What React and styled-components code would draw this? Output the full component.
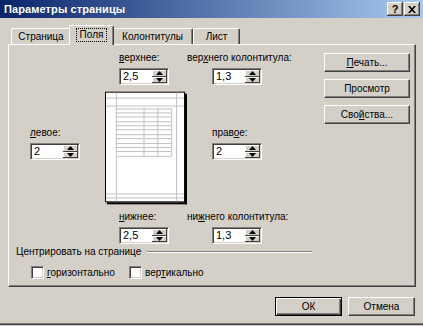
import React from "react";
import styled, { createGlobalStyle } from "styled-components";

const GlobalStyle = createGlobalStyle`
  body {
    margin: 0;
    background: #d4d0c8;
    font-family: "Liberation Sans", Arial, sans-serif;
    font-size: 10px;
    color: #000;
  }
`;

const Window = styled.div`
  width: 423px;
  height: 325px;
  box-sizing: border-box;
  background: #d4d0c8;
  border-bottom: 1px solid #404040;
  box-shadow: inset 0 -1px 0 #808080;
  display: flex;
  flex-direction: column;
  overflow: hidden;
`;

const TitleBar = styled.div`
  height: 18px;
  flex: none;
  display: flex;
  align-items: center;
  justify-content: space-between;
  padding: 0 3px 0 4px;
  background: linear-gradient(to right, #0a246a, #a6caf0);
`;

const Title = styled.span`
  color: #fff;
  font-weight: bold;
  font-size: 11px;
  letter-spacing: 0.1px;
`;

const CaptionButtons = styled.div`
  display: flex;
  gap: 1px;
`;

const CaptionButton = styled.div`
  width: 16px;
  height: 14px;
  box-sizing: border-box;
  background: #d4d0c8;
  box-shadow: inset -1px -1px 0 #404040, inset 1px 1px 0 #fff,
    inset -2px -2px 0 #808080;
  display: flex;
  align-items: center;
  justify-content: center;
  font-weight: bold;
  font-size: 11px;
  line-height: 1;
`;

const Body = styled.div`
  padding: 7px 7px 0 8px;
  display: flex;
  flex-direction: column;
`;

const TabStrip = styled.div`
  display: flex;
  align-items: flex-end;
  height: 19px;
  padding-left: 3px;
`;

const Tab = styled.div`
  position: relative;
  width: ${(p) => p.$width}px;
  height: ${(p) => (p.$active ? 20 : 16)}px;
  margin: ${(p) => (p.$active ? "0 -2px -1px" : "0")};
  z-index: ${(p) => (p.$active ? 2 : 1)};
  box-sizing: border-box;
  background: #d4d0c8;
  border-top: 1px solid #fff;
  border-left: 1px solid #fff;
  border-right: 1px solid #404040;
  border-radius: 2px 2px 0 0;
  box-shadow: inset -1px 0 0 #808080;
  display: flex;
  justify-content: center;
  align-items: ${(p) => (p.$active ? "flex-start" : "center")};
  padding-top: ${(p) => (p.$active ? 2 : 0)}px;
  line-height: 12px;
`;

const Focus = styled.span`
  outline: 1px dotted #000;
  padding: 0 3px;
  margin-top: 1px;
`;

const Panel = styled.div`
  width: 408px;
  height: 243px;
  box-sizing: border-box;
  border-top: 1px solid #fff;
  border-left: 1px solid #fff;
  border-right: 1px solid #404040;
  border-bottom: 1px solid #404040;
  box-shadow: inset -1px -1px 0 #808080;
  display: flex;
`;

const MarginArea = styled.div`
  padding-top: 7px;
  display: flex;
  flex-direction: column;
`;

const MarginGrid = styled.div`
  display: grid;
  grid-template-columns: 96px 82px 123px;
  grid-template-rows: 33px 114px 33px;
  row-gap: 6px;
`;

const Field = styled.div`
  display: flex;
  flex-direction: column;
  align-items: flex-start;
  gap: 4px;
  padding-left: ${(p) => p.$indent || 0}px;
  margin-top: ${(p) => p.$top || 0}px;
`;

const Label = styled.span`
  line-height: 12px;
  white-space: nowrap;
  margin-left: ${(p) => p.$shift || 0}px;
`;

const SpinBox = styled.div`
  width: 50px;
  height: 17px;
  box-sizing: border-box;
  background: #fff;
  border-top: 1px solid #808080;
  border-left: 1px solid #808080;
  border-right: 1px solid #fff;
  border-bottom: 1px solid #fff;
  box-shadow: inset 1px 1px 0 #404040, inset -1px -1px 0 #d4d0c8;
  display: flex;
  padding: 1px;
`;

const SpinText = styled.span`
  flex: 1;
  padding-left: 2px;
  line-height: 13px;
  font-size: 11px;
`;

const SpinButtons = styled.div`
  width: 15px;
  display: flex;
  flex-direction: column;
`;

const SpinButton = styled.div`
  flex: 1;
  background: #d4d0c8;
  box-shadow: inset -1px -1px 0 #404040, inset 1px 1px 0 #fff;
  display: flex;
  align-items: center;
  justify-content: center;
`;

const Arrow = ({ up }) => (
  <svg width="7" height="4" viewBox="0 0 7 4">
    <polygon points={up ? "0,4 7,4 3.5,0" : "0,0 7,0 3.5,4"} fill="#000" />
  </svg>
);

const Spin = ({ value }) => (
  <SpinBox>
    <SpinText>{value}</SpinText>
    <SpinButtons>
      <SpinButton>
        <Arrow up />
      </SpinButton>
      <SpinButton>
        <Arrow />
      </SpinButton>
    </SpinButtons>
  </SpinBox>
);

const PreviewCell = styled.div`
  display: flex;
`;

const PagePreview = () => {
  const rows = [];
  for (let y = 16.5; y <= 69; y += 4.4) rows.push(Math.round(y) + 0.5);
  const grey = "#c0c0c0";
  const last = rows[rows.length - 1];
  return (
    <svg width="83" height="114" viewBox="0 0 83 114">
      <rect x="81" y="2" width="2" height="112" fill="#000" />
      <rect x="2" y="112" width="81" height="2" fill="#000" />
      <rect x="0.5" y="0.5" width="80" height="111" fill="#fff" stroke="#000" />
      <line x1="11.5" y1="1" x2="11.5" y2="111" stroke={grey} />
      <line x1="72.5" y1="1" x2="72.5" y2="111" stroke={grey} />
      {[6.5, 14.5, 103.5, 107.5].map((y) => (
        <line key={y} x1="1" y1={y} x2="80" y2={y} stroke={grey} />
      ))}
      {rows.map((y) => (
        <line key={y} x1="11" y1={y} x2="67" y2={y} stroke={grey} />
      ))}
      <line x1="67.5" y1="16.5" x2="67.5" y2={last} stroke={grey} />
      <line x1="39.5" y1="16.5" x2="39.5" y2={last} stroke={grey} />
      <line x1="53.5" y1="16.5" x2="53.5" y2={last} stroke={grey} />
    </svg>
  );
};

const Separator = styled.div`
  display: flex;
  align-items: center;
  gap: 6px;
  width: 296px;
  margin: 2px 0 0 7px;
  line-height: 12px;

  &::after {
    content: "";
    flex: 1;
    height: 0;
    border-top: 1px solid #808080;
    border-bottom: 1px solid #fff;
  }
`;

const CheckRow = styled.div`
  display: flex;
  margin: 8px 0 0 22px;
`;

const CheckItem = styled.label`
  display: flex;
  align-items: center;
  gap: 3px;
  width: ${(p) => p.$width}px;
  line-height: 12px;
`;

const CheckBox = styled.span`
  width: 13px;
  height: 13px;
  box-sizing: border-box;
  background: #fff;
  border-top: 1px solid #808080;
  border-left: 1px solid #808080;
  border-right: 1px solid #fff;
  border-bottom: 1px solid #fff;
  box-shadow: inset 1px 1px 0 #404040, inset -1px -1px 0 #d4d0c8;
`;

const SideButtons = styled.div`
  margin-left: 12px;
  padding-top: 8px;
  display: flex;
  flex-direction: column;
  gap: 7px;
`;

const Button = styled.div`
  width: ${(p) => p.$width}px;
  height: 19px;
  box-sizing: border-box;
  background: #d4d0c8;
  border: 1px solid;
  border-color: ${(p) => (p.$default ? "#000" : "#fff #404040 #404040 #fff")};
  box-shadow: ${(p) =>
    p.$default
      ? "inset 1px 1px 0 #fff, inset -1px -1px 0 #404040, inset -2px -2px 0 #808080"
      : "inset -1px -1px 0 #808080"};
  display: flex;
  align-items: center;
  justify-content: center;
  line-height: 12px;
`;

const Footer = styled.div`
  display: flex;
  justify-content: flex-end;
  gap: 6px;
  margin-top: 10px;
  padding-right: 1px;
`;

export default function App() {
  return (
    <>
      <GlobalStyle />
      <Window>
        <TitleBar>
          <Title>Параметры страницы</Title>
          <CaptionButtons>
            <CaptionButton>?</CaptionButton>
            <CaptionButton>
              <svg width="8" height="7" viewBox="0 0 8 7">
                <path
                  d="M0,0h2l2,2.2l2,-2.2h2l-3,3.5l3,3.5h-2l-2,-2.2l-2,2.2h-2l3,-3.5z"
                  fill="#000"
                />
              </svg>
            </CaptionButton>
          </CaptionButtons>
        </TitleBar>
        <Body>
          <TabStrip>
            <Tab $width={60}>Страница</Tab>
            <Tab $width={45} $active>
              <Focus>Поля</Focus>
            </Tab>
            <Tab $width={81}>Колонтитулы</Tab>
            <Tab $width={47}>Лист</Tab>
          </TabStrip>
          <Panel>
            <MarginArea>
              <MarginGrid>
                <div />
                <Field $indent={14}>
                  <Label>
                    <u>в</u>ерхнее:
                  </Label>
                  <Spin value="2,5" />
                </Field>
                <Field $indent={25}>
                  <Label $shift={-25}>
                    вер<u>х</u>него колонтитула:
                  </Label>
                  <Spin value="1,3" />
                </Field>

                <Field $indent={21} $top={36}>
                  <Label>
                    <u>л</u>евое:
                  </Label>
                  <Spin value="2" />
                </Field>
                <PreviewCell>
                  <PagePreview />
                </PreviewCell>
                <Field $indent={25} $top={36}>
                  <Label>
                    прав<u>о</u>е:
                  </Label>
                  <Spin value="2" />
                </Field>

                <div />
                <Field $indent={14}>
                  <Label>
                    <u>н</u>ижнее:
                  </Label>
                  <Spin value="2,5" />
                </Field>
                <Field $indent={25}>
                  <Label $shift={-25}>
                    ни<u>ж</u>него колонтитула:
                  </Label>
                  <Spin value="1,3" />
                </Field>
              </MarginGrid>
              <Separator>Центрировать на странице</Separator>
              <CheckRow>
                <CheckItem $width={98}>
                  <CheckBox />
                  <span>
                    <u>г</u>оризонтально
                  </span>
                </CheckItem>
                <CheckItem $width={100}>
                  <CheckBox />
                  <span>
                    вер<u>т</u>икально
                  </span>
                </CheckItem>
              </CheckRow>
            </MarginArea>
            <SideButtons>
              <Button $width={86}>
                <span>
                  <u>П</u>ечать...
                </span>
              </Button>
              <Button $width={86}>Просмотр</Button>
              <Button $width={86}>
                <span>
                  Сво<u>й</u>ства...
                </span>
              </Button>
            </SideButtons>
          </Panel>
          <Footer>
            <Button $width={67} $default>
              ОК
            </Button>
            <Button $width={67}>Отмена</Button>
          </Footer>
        </Body>
      </Window>
    </>
  );
}
